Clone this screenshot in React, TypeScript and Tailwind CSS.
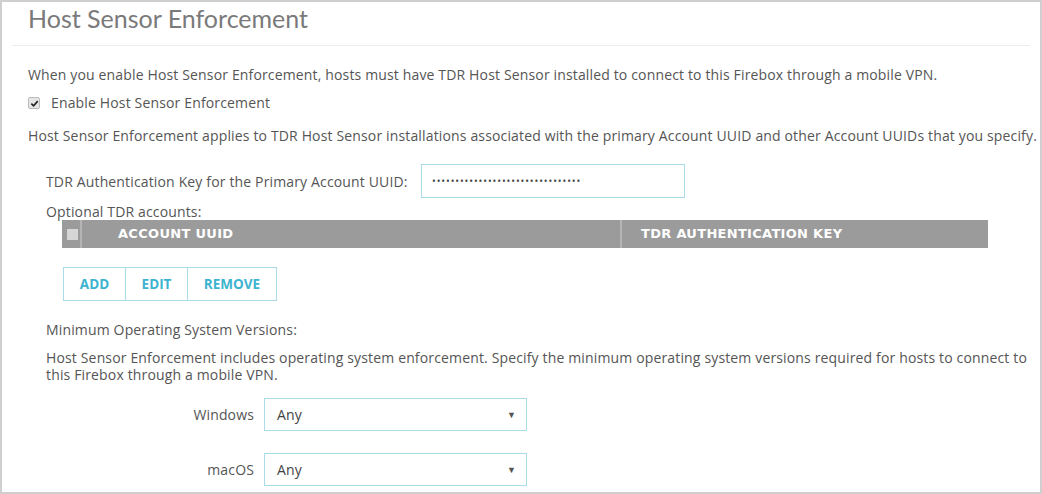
const body = "font-['Open_Sans',sans-serif]";

const OsSelect = ({ label }: { label: string }) => (
  <div className="flex items-center">
    <div className="w-[218px] pr-[10px] text-right">{label}</div>
    <div className="flex h-[33px] w-[263px] items-center justify-between border border-[#a9dce8] pl-[12px] pr-[10px] text-[#444]">
      <span>Any</span>
      <span className="text-[9px] text-[#555]">▼</span>
    </div>
  </div>
);

export default function App() {
  return (
    <div className={`h-[494px] w-[1042px] overflow-hidden border-2 border-[#cfcfcf] bg-white text-[14px] tracking-[0.15px] text-[#555] ${body}`}>
      {/* Title */}
      <div className="px-[26px] pt-[1px] font-['Lato',sans-serif] text-[25px] font-normal leading-[30px] tracking-normal text-[#7a7a7a]">
        Host Sensor Enforcement
      </div>
      <div className="mx-[10px] mt-[12px] border-t border-[#ececec]" />

      <div className="pl-[26px] pr-[2px]">
        <p className="mt-[20px] leading-[18px]">
          When you enable Host Sensor Enforcement, hosts must have TDR Host Sensor installed to connect to this Firebox through a mobile VPN.
        </p>
        <label className="mt-[10px] flex items-center gap-[11px] leading-[18px]">
          <span className="flex h-[12px] w-[12px] items-center justify-center rounded-[2px] border border-[#bbb] bg-[#e6e6e6]">
            <svg viewBox="0 0 10 10" className="h-[9px] w-[9px]">
              <path d="M1.5 5.2 L4 7.6 L8.6 2.4" fill="none" stroke="#222" strokeWidth="1.8" />
            </svg>
          </span>
          Enable Host Sensor Enforcement
        </label>
        <p className="mt-[15px] leading-[18px]">
          Host Sensor Enforcement applies to TDR Host Sensor installations associated with the primary Account UUID and other Account UUIDs that you specify.
        </p>

        <div className="pl-[18px]">
          <div className="mt-[19px] flex items-center">
            <span className="w-[375px]">TDR Authentication Key for the Primary Account UUID:</span>
            <div className="flex h-[34px] w-[264px] items-center border border-[#a9dce8] pl-[10px] text-[10px] tracking-[0.9px] text-[#444]">
              ••••••••••••••••••••••••••••••••
            </div>
          </div>
          <div className="mt-[6px] leading-[16px]">Optional TDR accounts:</div>

          {/* Table header */}
          <div className="ml-[16px] flex h-[28px] w-[926px] items-stretch bg-[#9b9b9b] font-['DejaVu_Sans',sans-serif] text-[13px] font-bold tracking-[0.3px] text-white">
            <div className="flex w-[20px] items-center justify-center border-r-2 border-[#b5b5b5] pl-[2px]">
              <span className="h-[11px] w-[11px] bg-[#d6d6d6]" />
            </div>
            <div className="flex w-[540px] items-center border-r-2 border-[#b5b5b5] pl-[36px]">ACCOUNT UUID</div>
            <div className="flex flex-1 items-center pl-[19px]">TDR AUTHENTICATION KEY</div>
          </div>

          {/* Buttons */}
          <div className="ml-[17px] mt-[19px] flex h-[34px] w-[214px] border border-[#a9dce8] text-[13.5px] font-bold tracking-normal text-[#3cb4d0]">
            <div className="flex w-[62px] items-center justify-center border-r border-[#a9dce8]">ADD</div>
            <div className="flex w-[62px] items-center justify-center border-r border-[#a9dce8]">EDIT</div>
            <div className="flex flex-1 items-center justify-center">REMOVE</div>
          </div>

          <div className="mt-[20px] leading-[18px]">Minimum Operating System Versions:</div>
          <p className="mt-[10px] leading-[17px]">
            Host Sensor Enforcement includes operating system enforcement. Specify the minimum operating system versions required for hosts to connect to this Firebox through a mobile VPN.
          </p>

          <div className="mt-[15px] flex flex-col gap-[22px]">
            <OsSelect label="Windows" />
            <OsSelect label="macOS" />
          </div>
        </div>
      </div>
    </div>
  );
}
